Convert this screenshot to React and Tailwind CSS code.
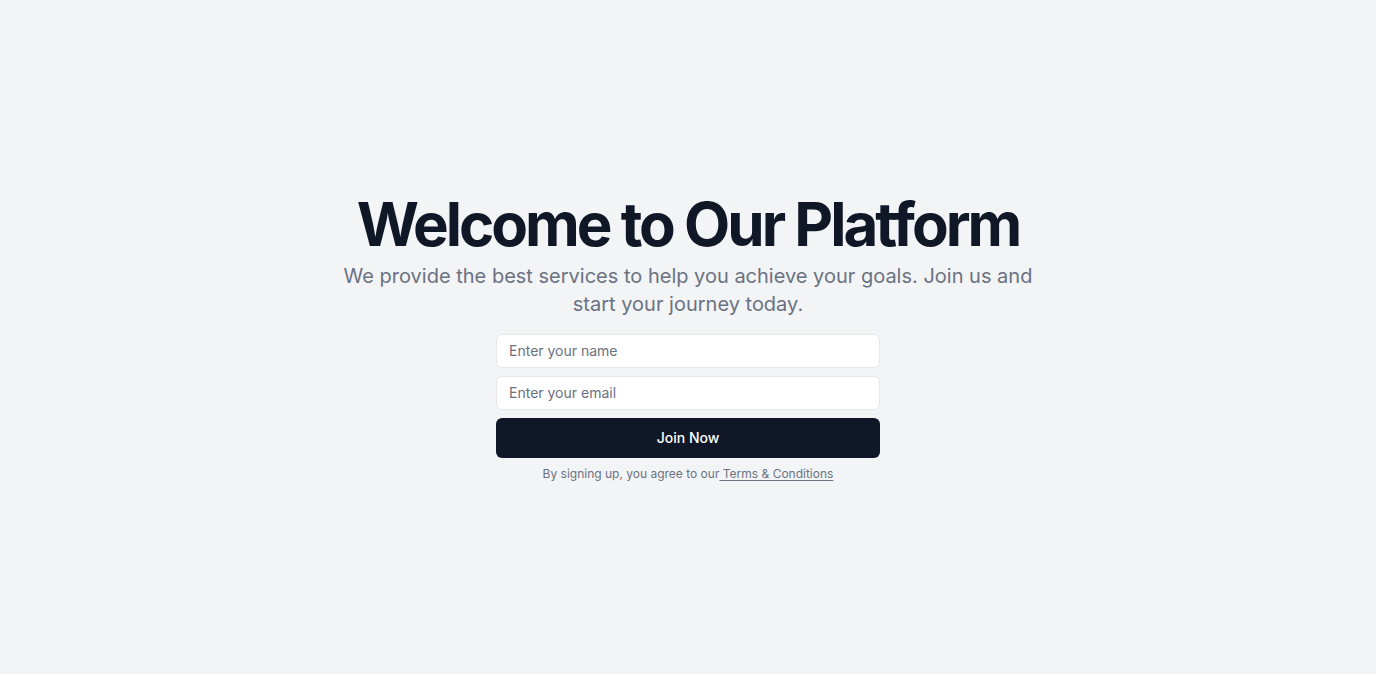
import React from "react";

export default function App() {
  return (
    <div
      className="min-h-screen bg-gray-100 flex flex-col items-center justify-center px-4 pt-0.5"
      style={{ fontFamily: "Inter, 'Noto Sans', sans-serif" }}
    >
      <h1 className="text-6xl font-bold tracking-tighter text-gray-900 text-center mb-2 [font-variant-ligatures:none] [font-feature-settings:'calt'_0]">
        Welcome to Our Platform
      </h1>
      <p className="text-xl text-gray-500 text-center max-w-[700px] mb-4">
        We provide the best services to help you achieve your goals. Join us and
        start your journey today.
      </p>

      <form className="w-full max-w-sm space-y-2">
        <input
          type="text"
          placeholder="Enter your name"
          className="w-full px-3 py-1.5 text-sm bg-white border border-gray-200 rounded-md placeholder:text-gray-500 focus:outline-none"
        />
        <input
          type="email"
          placeholder="Enter your email"
          className="w-full px-3 py-1.5 text-sm bg-white border border-gray-200 rounded-md placeholder:text-gray-500 focus:outline-none"
        />
        <button
          type="submit"
          className="w-full h-10 bg-gray-900 text-white text-sm font-medium rounded-md"
        >
          Join Now
        </button>
      </form>

      <p className="text-xs text-gray-500 mt-2">
        By signing up, you agree to our
        <a href="#" className="underline underline-offset-2">
          {" "}Terms &amp; Conditions
        </a>
      </p>
    </div>
  );
}
